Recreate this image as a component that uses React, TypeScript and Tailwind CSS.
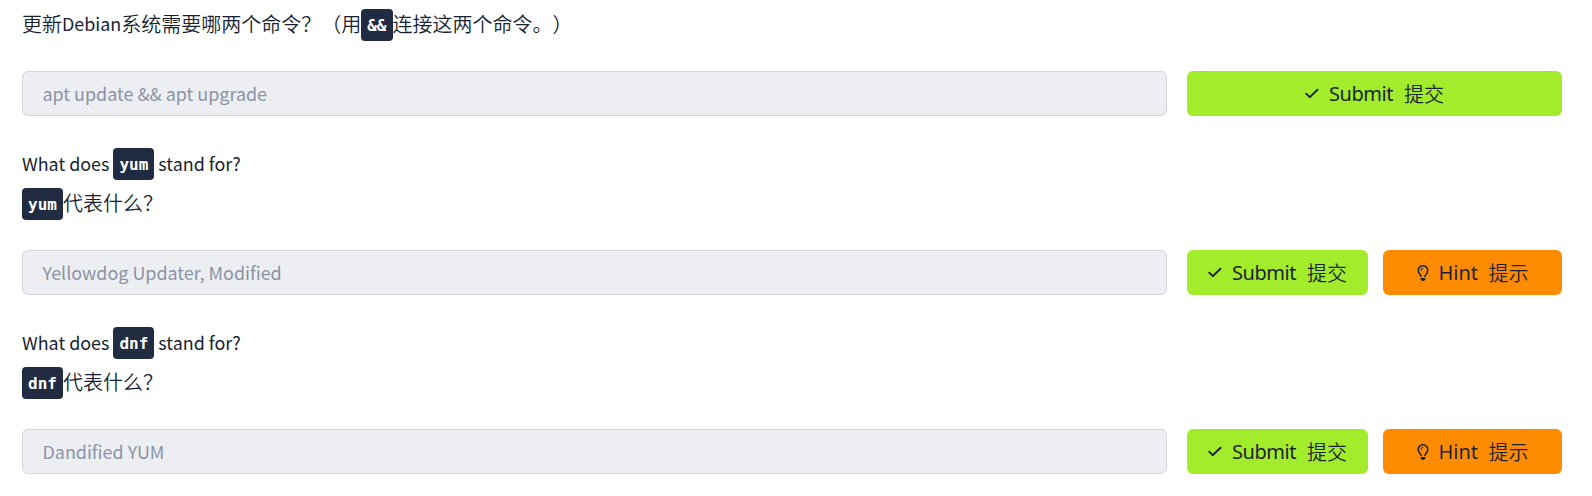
import React from "react";

function Code({ children }: { children: React.ReactNode }) {
  return (
    <code className="inline-flex h-8 items-center rounded-[4px] bg-[#212c42] px-1.5 pt-[2px] align-middle font-['DejaVu_Sans_Mono',monospace] text-[16px] leading-[30px] font-bold text-white">
      {children}
    </code>
  );
}

function CheckIcon() {
  return (
    <svg className="h-[14px] w-[14px] shrink-0" viewBox="0 0 14 14" fill="none" stroke="currentColor" strokeWidth="1.9" strokeLinecap="round" strokeLinejoin="round">
      <path d="M1.2 6.7 4.7 10.200 12.5 2.700" />
    </svg>
  );
}

function BulbIcon() {
  return (
    <svg className="h-4 w-3 shrink-0" viewBox="0 0 384 512" fill="currentColor">
      <path d="M297.2 248.9C311.6 228.3 320 203.2 320 176c0-70.7-57.3-128-128-128S64 105.300 64 176c0 27.200 8.400 52.300 22.800 72.900 3.700 5.300 8.100 11.300 12.800 17.700 12.900 17.700 28.300 38.900 39.800 59.800 10.400 19 15.700 38.800 18.300 57.500H109c-2.200-12-5.900-23.700-11.800-34.500-9.900-18-22.200-34.900-34.500-51.800-5.200-7.100-10.400-14.200-15.400-21.400C27.600 247.900 16 213.300 16 176 16 78.800 94.800 0 192 0s176 78.800 176 176c0 37.300-11.600 71.900-31.400 100.300-5 7.200-10.200 14.300-15.400 21.400-12.300 16.800-24.600 33.700-34.500 51.800-5.900 10.800-9.600 22.500-11.800 34.500h-48.600c2.600-18.700 7.900-38.600 18.300-57.500 11.500-20.900 26.900-42.100 39.800-59.800 4.700-6.400 9.100-12.400 12.800-17.800zM192 128c-26.500 0-48 21.500-48 48 0 8.800-7.200 16-16 16s-16-7.200-16-16c0-44.200 35.800-80 80-80 8.800 0 16 7.200 16 16s-7.200 16-16 16zm0 384c-44.200 0-80-35.800-80-80v-16h160v16c0 44.200-35.800 80-80 80z" />
    </svg>
  );
}

const buttonBase =
  "flex h-[45px] items-center justify-center rounded-[6px] font-['Noto_Sans','Noto_Sans_CJK_SC',sans-serif] text-[20px] leading-none text-[#1c2538]";

function Label({ en, zh, width }: { en: string; zh: string; width: string }) {
  return (
    <>
      <span className={"ml-[10px] text-left " + width}>{en}</span>
      <span className="ml-[10px] pt-px font-['Noto_Sans_CJK_SC',sans-serif] font-[350]">{zh}</span>
    </>
  );
}

function Answer({ value, hint }: { value: string; hint?: boolean }) {
  return (
    <div className="flex h-[45px] gap-5">
      <div className="flex w-[1145px] items-center rounded-[6px] border border-[#d2d5dd] bg-[#edeef2] pb-px pl-[19.5px] text-[17.92px] text-[#8b93a7]">
        <span>{value}</span>
      </div>
      <div className="flex w-[375px] gap-[15px]">
        <button className={buttonBase + " flex-1 bg-[#a3ec2b]"}>
          <CheckIcon />
          <Label en="Submit" zh="提交" width="w-[65px] tracking-[-0.45px]" />
        </button>
        {hint && (
          <button className={buttonBase + " w-[179px] bg-[#ff8b00]"}>
            <BulbIcon />
            <Label en="Hint" zh="提示" width="w-[40px]" />
          </button>
        )}
      </div>
    </div>
  );
}

function Question({ term }: { term: string }) {
  return (
    <div className="mt-7 mb-[26px]">
      <p className="flex h-10 items-center whitespace-pre text-[17.92px]">
        <span className="-mt-[2px]">What does </span>
        <Code>{term}</Code>
        <span className="-mt-[2px]"> stand for?</span>
      </p>
      <p className="flex h-10 items-center text-[20px] font-[350]">
        <Code>{term}</Code>
        <span className="-mt-[3px]">代表什么？</span>
      </p>
    </div>
  );
}

export default function App() {
  return (
    <main className="h-[496px] w-[1592px] overflow-hidden bg-white pt-[5px] pl-[22px] font-['Noto_Sans_CJK_SC',sans-serif] text-[#171f32] [text-spacing-trim:space-all]">
      <p className="mb-[26px] flex h-10 items-center text-[20px] font-[350]">
        <span className="-mt-[3px]">更新</span>
        <span className="-mt-[3px] text-[17.92px] font-normal">Debian</span>
        <span className="-mt-[3px]">系统需要哪两个命令？（用</span>
        <Code>&amp;&amp;</Code>
        <span className="-mt-[3px]">连接这两个命令。）</span>
      </p>
      <Answer value="apt update && apt upgrade" />
      <Question term="yum" />
      <Answer value="Yellowdog Updater, Modified" hint />
      <Question term="dnf" />
      <Answer value="Dandified YUM" hint />
    </main>
  );
}
